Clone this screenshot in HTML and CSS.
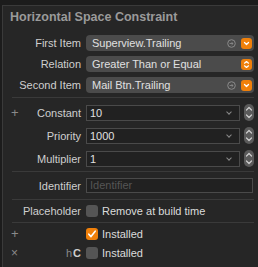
FILE: index.html
```html
<!DOCTYPE html>
<html>
<head>
<meta charset="utf-8">
<link rel="stylesheet" href="styles.css">
</head>
<body>
<div class="panel">
  <div class="title">Horizontal Space Constraint</div>
  <div class="grid g1">
    <div class="lbl">First Item</div>
    <div class="popup"><span class="ptext">Superview.Trailing</span><span class="goto"><svg width="9" height="9" viewBox="0 0 9 9"><circle cx="4.5" cy="4.5" r="3.8" stroke="#8a8a8a" stroke-width="1" fill="none"/><path d="M2.6 4.5 H6 M4.6 3.1 L6 4.5 L4.6 5.9" stroke="#8a8a8a" stroke-width="0.9" fill="none"/></svg></span><span class="obtn"><svg width="11" height="11" viewBox="0 0 11 11"><path d="M3.5 4.5 L5.5 6.5 L7.5 4.5" stroke="#fff" stroke-width="1.3" fill="none" stroke-linecap="round" stroke-linejoin="round"/></svg></span></div>
    <div class="lbl">Relation</div>
    <div class="popup"><span class="ptext">Greater Than or Equal</span><span class="obtn"><svg width="11" height="11" viewBox="0 0 11 11"><path d="M3.5 4.2 L5.5 2.5 L7.5 4.2 M3.5 6.8 L5.5 8.5 L7.5 6.8" stroke="#fff" stroke-width="1.2" fill="none" stroke-linecap="round" stroke-linejoin="round"/></svg></span></div>
    <div class="lbl">Second Item</div>
    <div class="popup"><span class="ptext">Mail Btn.Trailing</span><span class="goto"><svg width="9" height="9" viewBox="0 0 9 9"><circle cx="4.5" cy="4.5" r="3.8" stroke="#8a8a8a" stroke-width="1" fill="none"/><path d="M2.6 4.5 H6 M4.6 3.1 L6 4.5 L4.6 5.9" stroke="#8a8a8a" stroke-width="0.9" fill="none"/></svg></span><span class="obtn"><svg width="11" height="11" viewBox="0 0 11 11"><path d="M3.5 4.5 L5.5 6.5 L7.5 4.5" stroke="#fff" stroke-width="1.3" fill="none" stroke-linecap="round" stroke-linejoin="round"/></svg></span></div>
  </div>
  <div class="sep s1"></div>
  <div class="grid g2">
    <div class="lbl"><span class="side">+</span>Constant</div>
    <div class="combo"><div class="field">10<span class="chev"></span></div><span class="stepper"><svg width="10" height="17" viewBox="0 0 10 17"><path d="M2.5 6 L5 3.5 L7.5 6 M2.5 11 L5 13.5 L7.5 11" stroke="#cfcfcf" stroke-width="1.2" fill="none" stroke-linecap="round" stroke-linejoin="round"/></svg></span></div>
    <div class="lbl">Priority</div>
    <div class="combo"><div class="field">1000<span class="chev"></span></div><span class="stepper"><svg width="10" height="17" viewBox="0 0 10 17"><path d="M2.5 6 L5 3.5 L7.5 6 M2.5 11 L5 13.5 L7.5 11" stroke="#cfcfcf" stroke-width="1.2" fill="none" stroke-linecap="round" stroke-linejoin="round"/></svg></span></div>
    <div class="lbl">Multiplier</div>
    <div class="combo"><div class="field">1<span class="chev"></span></div><span class="stepper"><svg width="10" height="17" viewBox="0 0 10 17"><path d="M2.5 6 L5 3.5 L7.5 6 M2.5 11 L5 13.5 L7.5 11" stroke="#cfcfcf" stroke-width="1.2" fill="none" stroke-linecap="round" stroke-linejoin="round"/></svg></span></div>
  </div>
  <div class="sep s2"></div>
  <div class="grid g3">
    <div class="lbl">Identifier</div>
    <div class="idfield">Identifier</div>
  </div>
  <div class="sep s3"></div>
  <div class="grid g4">
    <div class="lbl">Placeholder</div>
    <div class="check"><span class="box"></span>Remove at build time</div>
  </div>
  <div class="sep s4"></div>
  <div class="grid g5">
    <div class="lbl"><span class="side">+</span></div>
    <div class="check"><span class="box on"><svg width="12" height="12" viewBox="0 0 12 12"><path d="M2.8 6.2 L5 8.6 L9.2 3.2" stroke="#fff" stroke-width="1.6" fill="none" stroke-linecap="round" stroke-linejoin="round"/></svg></span>Installed</div>
    <div class="lbl"><span class="side x">×</span><span class="hc">h<b>C</b></span></div>
    <div class="check"><span class="box"></span>Installed</div>
  </div>
</div>
</body>
</html>
```

FILE: styles.css
```css
html, body {
  margin: 0;
  padding: 0;
  background: #1c1c1c;
  width: 258px;
  height: 267px;
  overflow: hidden;
  font-family: "Liberation Sans", Arial, sans-serif;
}
.panel {
  margin-left: 2px;
  margin-top: 5px;
  border-left: 1px solid #3a3a3a;
  border-top: 1px solid #3a3a3a;
  background: #262626;
  height: 267px;
  box-sizing: border-box;
  padding: 0 4px 0 8px;
}
.title {
  color: #9a9a9a;
  font-weight: 700;
  font-size: 12.5px;
  height: 22px;
  line-height: 22px;
  margin-left: -1px;
}
.grid {
  display: grid;
  grid-template-columns: 70px 1fr;
  column-gap: 5px;
  align-items: center;
}
.lbl {
  color: #cfcfcf;
  font-size: 11px;
  line-height: 12px;
  display: flex;
  justify-content: flex-end;
  align-items: center;
  white-space: nowrap;
}
.side {
  margin-right: auto;
  color: #8a8a8a;
  font-size: 13px;
  line-height: 12px;
}
.side.x { font-size: 12px; }
.hc { color: #8a8a8a; }
.hc b { color: #cfcfcf; font-weight: 700; margin-left: 1px; }
.g1 { margin-top: 7px; grid-auto-rows: 16px; row-gap: 5px; }
.popup {
  height: 16px;
  background: #4b4b4b;
  border-radius: 4px;
  display: flex;
  align-items: center;
  color: #e0e0e0;
  font-size: 11px;
  padding-left: 6px;
  padding-right: 2px;
}
.ptext { flex: 1; }
.goto {
  display: flex;
  margin-right: 5px;
}
.obtn {
  width: 11px;
  height: 11px;
  background: #f0800a;
  border-radius: 3px;
  display: flex;
}
.sep {
  height: 1px;
  background: #3a3a3a;
  margin-left: 1px;
}
.s1 { margin-top: 4px; }
.g2 { margin-top: 6px; grid-auto-rows: 17px; row-gap: 6px; }
.combo { display: flex; align-items: center; }
.field {
  flex: 1;
  height: 16px;
  box-sizing: border-box;
  border: 1px solid #4a4a4a;
  background: #212121;
  color: #e0e0e0;
  font-size: 11px;
  line-height: 14px;
  padding-left: 3px;
  display: flex;
  align-items: center;
  justify-content: space-between;
}
.chev {
  width: 3px;
  height: 3px;
  border-right: 1px solid #8a8a8a;
  border-bottom: 1px solid #8a8a8a;
  transform: rotate(45deg);
  margin-right: 8px;
  margin-top: -2px;
}
.stepper {
  width: 10px;
  height: 17px;
  background: #5a5a5a;
  border-radius: 5px;
  margin-left: 4px;
  display: flex;
}
.s2 { margin-top: 4px; }
.g3 { margin-top: 6px; grid-auto-rows: 15px; }
.idfield {
  height: 15px;
  box-sizing: border-box;
  border: 1px solid #4a4a4a;
  background: #212121;
  color: #555;
  font-size: 11px;
  padding-left: 3px;
  line-height: 13px;
  margin-right: 1px;
}
.s3 { margin-top: 6px; }
.g4 { margin-top: 5px; grid-auto-rows: 12px; }
.check {
  display: flex;
  align-items: center;
  color: #dcdcdc;
  font-size: 11px;
  height: 12px;
}
.box {
  width: 12px;
  height: 12px;
  background: #555;
  border-radius: 3px;
  margin-right: 4px;
  display: flex;
}
.box.on { background: #f0800a; }
.s4 { margin-top: 5px; }
.g5 { margin-top: 5px; grid-auto-rows: 12px; row-gap: 7px; }
```
